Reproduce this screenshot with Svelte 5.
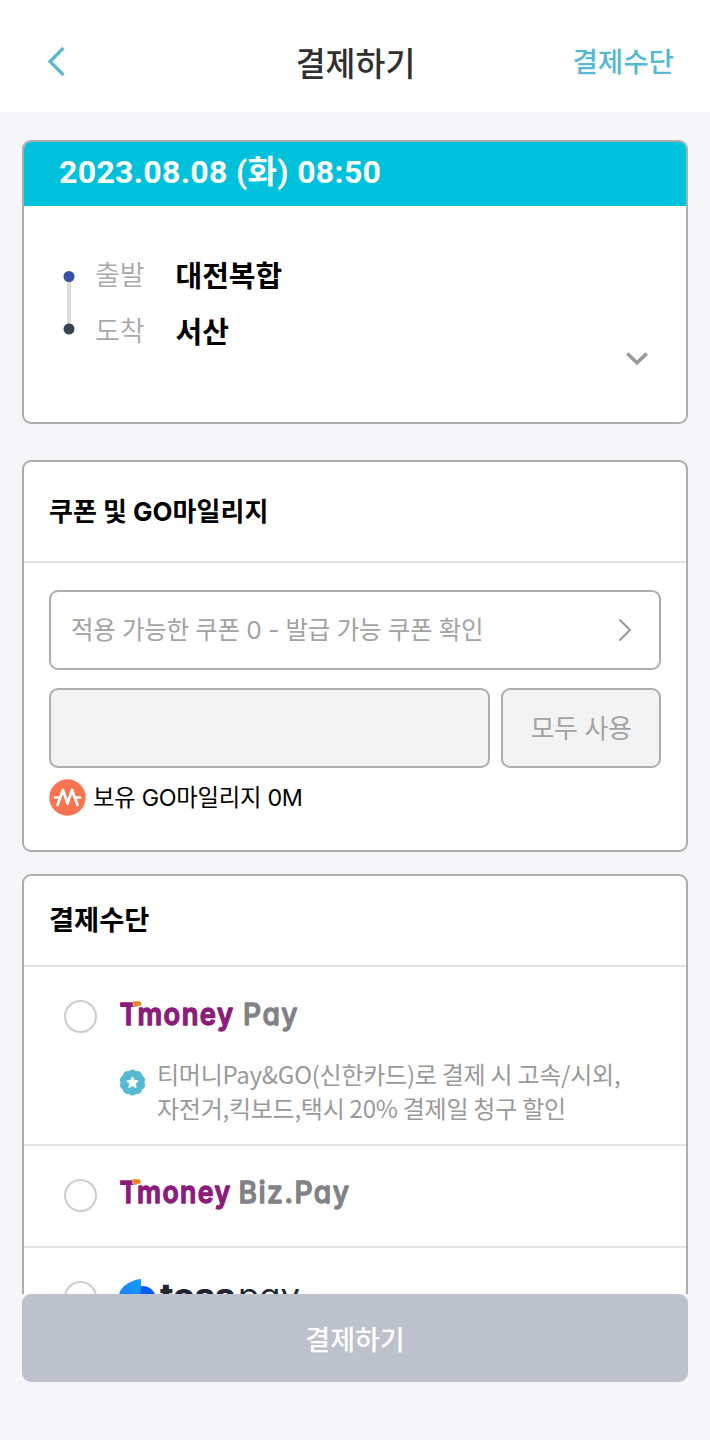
<script>
  let selected = $state(null);
</script>

<div class="screen">
  <header class="topbar">
    <button class="back" aria-label="뒤로">
      <svg width="20" height="32" viewBox="0 0 20 32"><path d="M17.500 2 4 15.500 17.500 29" fill="none" stroke="#55b9d1" stroke-width="3.200" /></svg>
    </button>
    <h1>결제하기</h1>
    <button class="methods">결제수단</button>
  </header>

  <main>
    <section class="card trip">
      <div class="date">2023.08.08 (화) 08:50</div>
      <div class="route">
        <svg class="line" width="12" height="66" viewBox="0 0 12 66">
          <rect x="4" y="6" width="4" height="54" fill="#dcdcdc" />
          <circle cx="6" cy="6.500" r="5.500" fill="#3950aa" />
          <circle cx="6" cy="59" r="5.500" fill="#38424f" />
        </svg>
        <dl>
          <dt>출발</dt><dd>대전복합</dd>
          <dt>도착</dt><dd>서산</dd>
        </dl>
        <svg class="down" width="24" height="16" viewBox="0 0 24 16"><path d="M2.300 2.500 12 11.800 21.700 2.500" fill="none" stroke="#999" stroke-width="3.600" /></svg>
      </div>
    </section>

    <section class="card coupon">
      <h2 class="coupon-title">쿠폰 및 GO마일리지</h2>
      <div class="coupon-body">
        <button class="field">
          <span>적용 가능한 쿠폰 0 - 발급 가능 쿠폰 확인</span>
          <svg width="14" height="24" viewBox="0 0 14 24"><path d="M1.500 1.500 12 12 1.500 22.500" fill="none" stroke="#999" stroke-width="2" /></svg>
        </button>
        <div class="mileage">
          <div class="amount"></div>
          <button class="all">모두 사용</button>
        </div>
        <div class="balance">
          <svg width="37" height="37" viewBox="0 0 37 37">
            <circle cx="18.500" cy="18.500" r="18.200" fill="#fb744f" />
            <path d="M6 18.500H10.500M8.500 26 14 11 18.500 24.500 23 11 28.500 26M26.500 18.500H31" fill="none" stroke="#fff" stroke-width="2.700" stroke-linecap="round" stroke-linejoin="round" />
          </svg>
          <span>보유 GO마일리지 0M</span>
        </div>
      </div>
    </section>

    <section class="card pay">
      <h2 class="pay-title">결제수단</h2>
      <div class="option first">
        <button class="radio" class:on={selected === 'pay'} aria-label="Tmoney Pay" onclick={() => (selected = 'pay')}></button>
        <div class="detail">
          <svg class="logo" width="240" height="40" viewBox="0 0 240 40">
            <text class="brand tm" x="1.500" y="28" textLength="115" lengthAdjust="spacingAndGlyphs">Tmoney</text>
            <path d="M14 4H21A2.500 2.500 0 0 1 21 9.300H15.500Q15.500 6 14 4Z" fill="#e6811d" stroke="#fff" stroke-width=".6" />
            <text class="brand gray" x="125" y="28" textLength="56" lengthAdjust="spacingAndGlyphs">Pay</text>
          </svg>
          <div class="benefit">
            <svg width="28" height="28" viewBox="0 0 28 28">
              <g fill="#55b9d1">
                <circle cx="14.500" cy="13.500" r="12" />
                {#each Array(10) as _, i}
                  <circle cx="14.500" cy="4" r="3.500" transform={`rotate(${i * 36} 14.500 13.500)`} />
                {/each}
              </g>
              <path d="M14.500 7.800 16.300 11.400 20.200 11.900 17.400 14.700 18.100 18.700 14.500 16.800 10.900 18.700 11.600 14.700 8.800 11.900 12.700 11.400Z" fill="#fff" stroke="#fff" stroke-width="1" stroke-linejoin="round" />
            </svg>
            <p>티머니Pay&amp;GO(신한카드)로 결제 시 고속/시외,<br />자전거,킥보드,택시 20% 결제일 청구 할인</p>
          </div>
        </div>
      </div>
      <div class="option second">
        <button class="radio" class:on={selected === 'biz'} aria-label="Tmoney Biz.Pay" onclick={() => (selected = 'biz')}></button>
        <svg class="logo" width="240" height="40" viewBox="0 0 240 40">
          <text class="brand tm" x="1.500" y="28" textLength="112" lengthAdjust="spacingAndGlyphs">Tmoney</text>
          <path d="M13.500 4H20.300A2.500 2.500 0 0 1 20.300 9.300H15Q15 6 13.500 4Z" fill="#e6811d" stroke="#fff" stroke-width=".6" />
          <text class="brand gray" x="120.500" y="28" textLength="112" lengthAdjust="spacingAndGlyphs">Biz.Pay</text>
        </svg>
      </div>
      <div class="option third">
        <button class="radio" class:on={selected === 'toss'} aria-label="toss pay" onclick={() => (selected = 'toss')}></button>
        <svg class="logo" width="240" height="40" viewBox="0 0 240 40">
          <defs>
            <linearGradient id="light" x1="0" y1="1" x2="1" y2="0"><stop offset="0" stop-color="#1672f8" /><stop offset="1" stop-color="#16a0fb" /></linearGradient>
          </defs>
          <path d="M20 7.500C30 5 38 11 38 21S28 35 20 32Z" fill="#0b5cf0" />
          <path d="M23 0V11Q21.500 17 20 32 2 31 1 18C0 10 11 1 23 0Z" fill="url(#light)" />
          <text class="toss" x="42" y="28" textLength="75" lengthAdjust="spacingAndGlyphs">toss</text>
          <text class="tpay" x="120" y="28" textLength="62" lengthAdjust="spacingAndGlyphs">pay</text>
        </svg>
      </div>
    </section>
  </main>

  <footer><button class="submit">결제하기</button></footer>
</div>

<style>
  :global(body) { background: #f6f6f9; }
  .screen {
    width: 710px; height: 1440px; overflow: hidden;
    display: flex; flex-direction: column;
    background: #f6f6f9; color: #000;
    font-family: Inter, "Noto Sans CJK KR", sans-serif;
  }
  .screen * { box-sizing: border-box; }
  button { font: inherit; border: 0; background: none; padding: 0; margin: 0; display: block; }
  svg { display: block; flex: none; }
  h1, h2, p, dl, dd { margin: 0; }
  .topbar {
    flex: none; height: 112px; background: #fff;
    display: grid; grid-template-columns: 150px 1fr 150px; align-items: center;
    padding: 12px 36px 0 46px;
  }
  h1 {
    font: 500 32.500px/48px "Noto Sans CJK KR", sans-serif; color: #303030;
    text-align: center; padding-right: 9px; margin-top: -1px;
  }
  .methods { font: 500 27.600px/40px "Noto Sans CJK KR", sans-serif; color: #55b9d1; text-align: right; margin-top: -4px; }
  main { flex: 1; min-height: 0; overflow: hidden; padding: 28px 22px 0; }
  .card { border: 2px solid #adadad; border-radius: 9px; background: #fff; overflow: hidden; }
  .trip { height: 284px; margin-bottom: 36px; }
  .date {
    height: 63.500px; padding-left: 35px; background: #00c1db; color: #fff;
    font: 700 32px/61px Roboto, "Noto Sans CJK KR", sans-serif; letter-spacing: .33px;
  }
  .route { display: flex; padding: 50.500px 37px 0 39px; }
  .line { margin-top: 14px; }
  dl {
    flex: 1; display: grid; grid-template-columns: 80.500px 1fr; grid-auto-rows: 56px; line-height: 40px;
    padding-left: 20px; margin-top: -2px; font-family: "Noto Sans CJK KR", sans-serif;
  }
  dt { font-size: 27px; font-weight: 350; color: #a8a8a8; }
  dd { font-size: 29px; font-weight: 700; }
  .down { margin-top: 95px; }
  .coupon { height: 392px; margin-bottom: 22px; }
  h2 { font-weight: 700; padding-left: 25px; border-bottom: 2px solid #e2e2e2; }
  .coupon-title { height: 101px; font-size: 26px; line-height: 99px; }
  .coupon-body { padding: 27px 25px 0; display: flex; flex-direction: column; }
  .field {
    height: 80px; border: 2px solid #adadad; border-radius: 9px;
    padding: 0 27px 0 20px; display: flex; align-items: center; justify-content: space-between;
    font-size: 24.500px; letter-spacing: -.31px; color: #a3a3a3; font-weight: 400;
  }
  .field span { margin-top: -3px; }
  .mileage { display: flex; gap: 11px; margin-top: 18px; }
  .amount { flex: 1; height: 80px; border: 2px solid #adadad; border-radius: 9px; background: #f3f3f3; }
  .all { width: 160px; padding-bottom: 4px; border: 2px solid #adadad; border-radius: 9px; background: #f3f3f3; color: #a3a3a3; font-size: 26px; letter-spacing: -.4px; }
  .balance { display: flex; align-items: center; gap: 7px; margin-top: 11px; font-size: 23.300px; letter-spacing: -.25px; line-height: 37px; }
  .pay { height: 500px; }
  .pay-title { height: 91px; font: 700 27.300px/84px "Noto Sans CJK KR", sans-serif; }
  .option { display: flex; align-items: flex-start; padding-left: 40px; border-bottom: 2px solid #e2e2e2; }
  .first { height: 179px; padding-top: 33px; }
  .second { height: 102px; padding-top: 33px; }
  .third { padding-top: 33px; }
  .radio { width: 33px; height: 33px; border: 2px solid #ccc; border-radius: 50%; flex: none; margin-right: 21px; }
  .radio.on { border: 9px solid #55b9d1; }
  .first .logo { margin-top: -3px; }
  .second .logo { margin-top: -4px; }
  .third .logo { margin-top: -2px; }
  .brand {
    font: 600 30px Inter, sans-serif; font-feature-settings: "cv11"; letter-spacing: 1.600px;
    stroke-width: 1.300; stroke-linejoin: round;
  }
  .tm { fill: #8c1c7b; stroke: #8c1c7b; }
  .gray { fill: #808285; stroke: #808285; font-weight: 500; }
  .toss { font: 800 33px Inter, sans-serif; fill: #202632; }
  .tpay { font: 400 33px Inter, sans-serif; font-feature-settings: "cv11"; fill: #202632; }
  .benefit { display: flex; gap: 11px; margin-top: 18px; }
  .benefit svg { margin-top: 14px; }
  .benefit p { font: 400 24px/34px "Noto Sans CJK KR", sans-serif; letter-spacing: -.25px; color: #999; white-space: nowrap; margin-top: 2px; }
  footer { flex: none; height: 146px; padding: 0 22px; background: #f6f6f9; }
  .submit {
    width: 100%; height: 88px; border-radius: 9px; background: #bdc1cc; color: #fff;
    font: 500 27px/89px "Noto Sans CJK KR", sans-serif; text-align: center;
  }
</style>
